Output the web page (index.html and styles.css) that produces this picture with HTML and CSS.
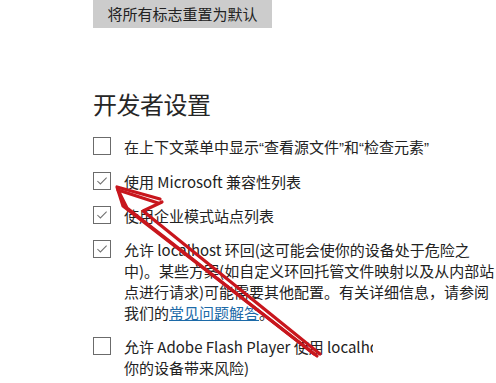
FILE: index.html
```html
<!DOCTYPE html>
<html lang="zh-CN">
<head>
<meta charset="utf-8">
<link rel="stylesheet" href="styles.css">
</head>
<body>
<div class="page">
  <div class="reset-btn">将所有标志重置为默认</div>
  <h2 class="section-title">开发者设置</h2>
  <ul class="options">
    <li class="option">
      <span class="box"></span>
      <span class="label">在上下文菜单中显示<span class="q">“</span>查看源文件<span class="q">”</span>和<span class="q">“</span>检查元素<span class="q">”</span></span>
    </li>
    <li class="option">
      <span class="box checked"><svg viewBox="0 0 19 19"><path d="M4 9.5 L7.6 13 L15 5.6"/></svg></span>
      <span class="label">使用 Microsoft 兼容性列表</span>
    </li>
    <li class="option">
      <span class="box checked"><svg viewBox="0 0 19 19"><path d="M4 9.5 L7.6 13 L15 5.6"/></svg></span>
      <span class="label">使用企业模式站点列表</span>
    </li>
    <li class="option">
      <span class="box checked"><svg viewBox="0 0 19 19"><path d="M4 9.5 L7.6 13 L15 5.6"/></svg></span>
      <span class="label">允许 localhost 环回(这可能会使你的设备处于危险之中)。某些方案(如自定义环回托管文件映射以及从内部站点进行请求)可能需要其他配置。有关详细信息，请参阅我们的<a class="link" href="#">常见问题解答</a>。</span>
    </li>
    <li class="option">
      <span class="box"></span>
      <span class="label"><span class="cut">允许 Adobe Flash Player 使用 localhost 环回(这可能会给</span><br>你的设备带来风险)</span>
    </li>
  </ul>
</div>
<svg class="arrow" viewBox="0 0 496 383" width="496" height="383">
  <polyline points="160,199 117,187 123,206 317,356"/>
  <polyline points="162,202 143,211 320,354"/>
  <polyline points="158,203 118,190 127,208 314,354"/>
</svg>
</body>
</html>
```
FILE: styles.css
```css
html, body {
  margin: 0;
  padding: 0;
  background: #ffffff;
}
body {
  width: 496px;
  height: 383px;
  overflow: hidden;
  position: relative;
  font-family: "Noto Sans CJK SC", "Noto Sans", sans-serif;
  color: #222222;
}
.page {
  padding-left: 93px;
}
.reset-btn {
  display: inline-block;
  width: 179px;
  height: 28px;
  line-height: 28px;
  background: #cccccc;
  font-size: 15px;
  text-align: center;
  color: #222;
}
.section-title {
  margin: 60px 0 0 0;
  font-size: 24px;
  line-height: 32px;
  font-weight: 400;
  color: #262626;
  letter-spacing: -0.5px;
}
.options {
  list-style: none;
  margin: 16px 0 0 0;
  padding: 0;
  display: flex;
  flex-direction: column;
  gap: 13px;
}
.option {
  display: flex;
  align-items: flex-start;
  gap: 13px;
}
.box {
  flex: none;
  width: 16px;
  height: 16px;
  margin-top: 1px;
  border: 1.5px solid #6b6b6b;
  background: #fff;
  display: flex;
}
.box svg {
  width: 16px;
  height: 16px;
  fill: none;
  stroke: #707070;
  stroke-width: 1.2;
}
.label {
  width: 372px;
  font-size: 15px;
  line-height: 21px;
  color: #222;
}
.q {
  font-family: "Liberation Sans", sans-serif;
}
.cut {
  display: inline-block;
  max-width: 249px;
  overflow: hidden;
  white-space: nowrap;
  vertical-align: top;
}
.link {
  color: #1c6aa8;
  text-decoration: underline;
}
.arrow {
  position: absolute;
  left: 0;
  top: 0;
  pointer-events: none;
}
.arrow polyline {
  fill: none;
  stroke: #c8161d;
  stroke-width: 3.2;
  stroke-linejoin: round;
  stroke-linecap: round;
}
```
